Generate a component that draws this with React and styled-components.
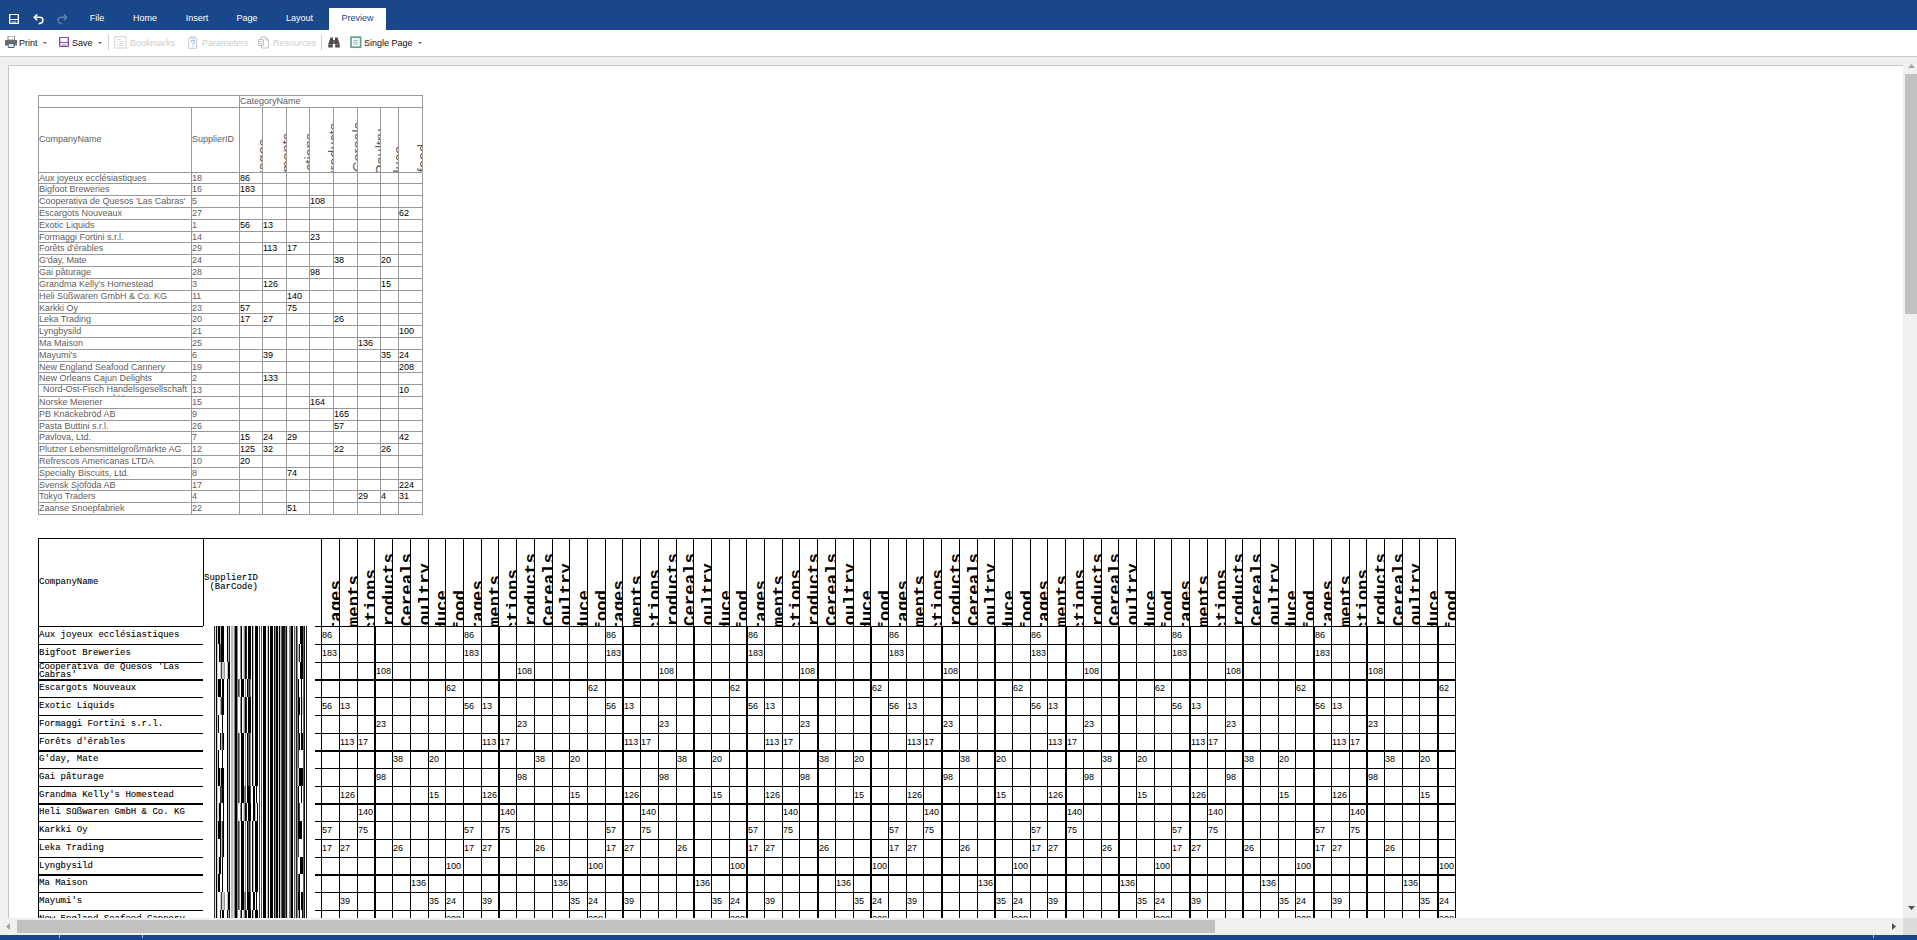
import React from "react";
import styled, { createGlobalStyle, css } from "styled-components";

const BLUE = "#19478a";

const GlobalStyle = createGlobalStyle`
  * { box-sizing: border-box; }
  html, body { margin: 0; padding: 0; overflow: hidden; }
  body { font-family: "Liberation Sans", Arial, sans-serif; font-size: 9px; background: #f0f0f0; }
`;

const Shell = styled.div`
  display: flex;
  flex-direction: column;
  width: 1917px;
  height: 940px;
  overflow: hidden;
  background: #f0f0f0;
`;

/* ---------- ribbon ---------- */

const Ribbon = styled.header`
  display: flex;
  align-items: flex-end;
  height: 30px;
  flex: none;
  background: ${BLUE};
  color: #fff;
`;

const QuickActions = styled.div`
  display: flex;
  gap: 13px;
  width: 78px;
  height: 22px;
  padding: 6px 0 0 9px;
`;

const QuickIcon = styled.svg`
  width: 11px;
  height: 11px;
  flex: none;
  opacity: ${(p) => (p.$faded ? 0.3 : 1)};
`;

const Tab = styled.div`
  width: ${(p) => p.$w}px;
  height: 22px;
  margin-left: ${(p) => (p.$active ? 4 : 0)}px;
  line-height: 20px;
  text-align: center;
  white-space: nowrap;
  background: ${(p) => (p.$active ? "#fff" : "transparent")};
  color: ${(p) => (p.$active ? BLUE : "#fff")};
`;

/* ---------- toolbar ---------- */

const Toolbar = styled.div`
  display: flex;
  align-items: center;
  height: 27px;
  flex: none;
  padding: 0 0 1px 5px;
  background: #fff;
  border-bottom: 1px solid #c6c6c6;
`;

const Tool = styled.div`
  display: flex;
  align-items: center;
  width: ${(p) => p.$w}px;
  height: 15px;
  white-space: nowrap;
  color: ${(p) => (p.$off ? "#cccccc" : "#111")};
`;

const ToolIcon = styled.svg`
  width: 13px;
  height: 13px;
  flex: none;
  margin-right: ${(p) => p.$gap}px;
`;

const Caret = styled.i`
  width: 0;
  height: 0;
  margin-left: ${(p) => p.$ml}px;
  border: 2px solid transparent;
  border-top-color: #666;
  border-bottom: 0;
`;

const Divider = styled.div`
  width: 1px;
  height: 15px;
  margin-right: ${(p) => p.$mr}px;
  background: #cfcfcf;
`;

/* ---------- viewer ---------- */

const Viewer = styled.main`
  display: grid;
  grid-template-columns: 1903px 14px;
  grid-template-rows: 861px 17px;
  flex: none;
`;

const PageArea = styled.div`
  overflow: hidden;
  padding: 8px 0 0 8px;
`;

const Sheet = styled.div`
  height: 853px;
  overflow: hidden;
  padding: 29px 0 0 29px;
  background: #fff;
  border: solid #c6c6c6;
  border-width: 1px 0 0 1px;
`;

const VScroll = styled.div`
  display: flex;
  flex-direction: column;
  align-items: flex-end;
  padding: 7px 0 8px;
`;

const HScroll = styled.div`
  display: flex;
  align-items: center;
  padding: 0 7px 0 6px;
`;

const Arrow = styled.svg`
  display: block;
  flex: none;
  fill: ${(p) => p.$c};
  margin: ${(p) => p.$m};
`;

const Thumb = styled.div`
  flex: none;
  width: ${(p) => p.$w}px;
  height: ${(p) => p.$h}px;
  background: #c1c1c1;
`;

const Spacer = styled.div`
  flex: 1;
`;

const Corner = styled.div`
  background: #dcdcdc;
`;

const StatusBar = styled.footer`
  display: flex;
  height: 5px;
  flex: none;
  background: ${BLUE};
`;

const StatusMark = styled.div`
  width: 1px;
  height: 3px;
  margin-left: ${(p) => p.$ml}px;
  background: #a9bcd8;
`;

/* ---------- plain cross table ---------- */

const PlainTable = styled.div`
  width: 385px;
  border: solid #999;
  border-width: 1px 0 0 1px;
  color: #606060;
`;

const PlainRow = styled.div`
  display: grid;
  grid-template-columns: ${(p) => p.$cols};
  height: ${(p) => p.$h}px;
`;

const PlainCell = styled.div`
  display: flex;
  align-items: ${(p) => (p.$tall ? "center" : "flex-start")};
  padding-bottom: ${(p) => (p.$tall ? 2 : 0)}px;
  overflow: hidden;
  min-width: 0;
  line-height: 10px;
  white-space: nowrap;
  border: solid #999;
  border-width: 0 1px 1px 0;
  ${(p) => p.$value && css`color: #000;`}
  ${(p) =>
    p.$wrap &&
    css`
      justify-content: center;
      white-space: normal;
      text-align: center;
      line-height: 8.5px;
    `}
`;

const UpHead = styled.div`
  display: flex;
  justify-content: flex-end;
  align-items: flex-start;
  overflow: hidden;
  min-width: 0;
  border: solid #999;
  border-width: 0 1px 1px 0;
`;

const UpText = styled.span`
  flex: none;
  writing-mode: vertical-rl;
  transform: rotate(180deg);
  white-space: nowrap;
  margin-top: ${(p) => p.$top}px;
  margin-right: ${(p) => (p.$mono ? -8 : -10)}px;
  line-height: 18px;
  font-size: 14.5px;
  ${(p) =>
    p.$mono &&
    css`
      font: bold 17.4px/20px "Liberation Mono", "Courier New", monospace;
    `}
`;

/* ---------- barcode cross table ---------- */

const CodeTable = styled.div`
  display: flex;
  margin-top: 23px;
  width: 1418px;
  color: #000;
`;

const mono = css`
  font-family: "Liberation Mono", "Courier New", monospace;
  font-size: 9px;
  -webkit-text-stroke: 0.1px #000;
`;

const NameColumn = styled.div`
  width: 165px;
  flex: none;
  border-left: 1px solid #000;
  ${mono}
`;

const CodeColumn = styled.div`
  width: 112px;
  flex: none;
  ${mono}
`;

const GridColumn = styled.div`
  width: 1141px;
  flex: none;
`;

const HeadCell = styled.div`
  display: flex;
  align-items: center;
  height: 88px;
  white-space: pre;
  line-height: 9px;
  border: solid #000;
  border-width: 1px 0 0 ${(p) => (p.$left ? 1 : 0)}px;
`;

const NameCell = styled.div`
  display: flex;
  align-items: flex-start;
  height: ${(p) => p.$h}px;
  padding: ${(p) => (p.$twoLines ? 0 : p.$thick ? 3 : 4)}px 10px 0 0;
  line-height: 8px;
  border-top: ${(p) => (p.$thick ? 2 : 1)}px solid #000;
`;

const Barcode = styled.svg`
  display: block;
  margin-left: 11px;
`;

const GridHead = styled.div`
  display: flex;
  height: 88px;
  padding-left: 6px;
  border-top: 1px solid #000;
`;

const GridRow = styled.div`
  display: flex;
  height: ${(p) => p.$h}px;
  padding-left: 6px;
  border-top: ${(p) => (p.$thick ? 2 : 1)}px solid #000;
`;

const GridCell = styled.div`
  display: flex;
  align-items: flex-start;
  justify-content: ${(p) => (p.$head ? "flex-end" : "flex-start")};
  width: ${(p) => p.$w}px;
  flex: none;
  overflow: hidden;
  white-space: nowrap;
  padding-top: ${(p) => p.$pad || 0}px;
  line-height: 10px;
  border: solid #000;
  border-width: 0 ${(p) => (p.$last ? 1 : 0)}px 0 ${(p) => (p.$thick ? 2 : 1)}px;
`;

/* ---------- data ---------- */

const CATEGORIES = [
  ["Beverages", 31, 41],
  ["Condiments", 25, 36],
  ["Confections", 25, 30],
  ["Dairy Products", 15, 14],
  ["Grains/Cereals", 14, 14],
  ["Meat/Poultry", 21, 24],
  ["Produce", 38, 51],
  ["Seafood", 36, 51],
];

const SUPPLIERS = [
  ["Aux joyeux ecclésiastiques", 18, { 0: 86 }],
  ["Bigfoot Breweries", 16, { 0: 183 }],
  ["Cooperativa de Quesos 'Las Cabras'", 5, { 3: 108 }],
  ["Escargots Nouveaux", 27, { 7: 62 }],
  ["Exotic Liquids", 1, { 0: 56, 1: 13 }],
  ["Formaggi Fortini s.r.l.", 14, { 3: 23 }],
  ["Forêts d'érables", 29, { 1: 113, 2: 17 }],
  ["G'day, Mate", 24, { 4: 38, 6: 20 }],
  ["Gai pâturage", 28, { 3: 98 }],
  ["Grandma Kelly's Homestead", 3, { 1: 126, 6: 15 }],
  ["Heli Süßwaren GmbH & Co. KG", 11, { 2: 140 }],
  ["Karkki Oy", 23, { 0: 57, 2: 75 }],
  ["Leka Trading", 20, { 0: 17, 1: 27, 4: 26 }],
  ["Lyngbysild", 21, { 7: 100 }],
  ["Ma Maison", 25, { 5: 136 }],
  ["Mayumi's", 6, { 1: 39, 6: 35, 7: 24 }],
  ["New England Seafood Cannery", 19, { 7: 208 }],
  ["New Orleans Cajun Delights", 2, { 1: 133 }],
  ["Nord-Ost-Fisch Handelsgesellschaft mbH", 13, { 7: 10 }],
  ["Norske Meierier", 15, { 3: 164 }],
  ["PB Knäckebröd AB", 9, { 4: 165 }],
  ["Pasta Buttini s.r.l.", 26, { 4: 57 }],
  ["Pavlova, Ltd.", 7, { 0: 15, 1: 24, 2: 29, 7: 42 }],
  ["Plutzer Lebensmittelgroßmärkte AG", 12, { 0: 125, 1: 32, 4: 22, 6: 26 }],
  ["Refrescos Americanas LTDA", 10, { 0: 20 }],
  ["Specialty Biscuits, Ltd.", 8, { 2: 74 }],
  ["Svensk Sjöföda AB", 17, { 7: 224 }],
  ["Tokyo Traders", 4, { 5: 29, 6: 4, 7: 31 }],
  ["Zaanse Snoepfabriek", 22, { 2: 51 }],
];

const PLAIN_COLS = "153px 48px 23px 24px 23px 24px 24px 23px 18px 24px";
const SHORT_ROWS = new Set([0, 5, 11, 16, 21, 26]);

/* [height, heavy top rule] */
const CODE_ROWS = [
  [18], [18], [17], [18, true], [18], [18], [17], [18, true], [18], [17],
  [18, true], [18], [18], [17], [18, true], [18], [18],
];

const REPEATS = 8;
const columnLine = (i) => Math.round(321.32 + 17.71 * i);
const THICK_COLUMNS = new Set([3, 10, 17, 21, 24, 28, 31, 35, 38, 42, 45, 49, 52, 56, 59, 63]);
const COLUMNS = Array.from({ length: REPEATS * 8 }, (_, i) => ({
  category: i % 8,
  width: columnLine(i + 1) - columnLine(i) + (i === REPEATS * 8 - 1 ? 1 : 0),
  thick: THICK_COLUMNS.has(i),
  last: i === REPEATS * 8 - 1,
}));

/* One hex digit per pixel: 0 is black, f is white. */
const BAR_A = "3d0c";
const BAR_B = "fff0b2fbbd8008";
const BAR_B_ALT = "9ffb00fbbd8008";
const BAR_C = "f4f5f000fb1f000f1800d0c611261df8600f5c28";
const MID_1 = "ff80fc802f000f0bf000";
const MID_2 = "48f000f8f0628f0bf000";
const MID_3 = "48f00086f0004ff00f0f";
const MID_4 = "ff80fc802f000ff00bf0";
const BAR_ROWS = [
  ["00c000", MID_1, "ff000"], ["f04000", MID_1, "b2f00"], ["ffc4cc", MID_1, "ff000", true],
  ["000f00", MID_2, "0ff0f"], ["ffa300", MID_1, "00f0c"], ["0fff0f", MID_1, "0ff0f"],
  ["ff0b40", MID_2, "40f00"], ["0fff0f", MID_2, "4ffff"], ["00c000", MID_2, "c0000"],
  ["ff3400", MID_3, "0ff0f"], ["d00ff0", MID_4, "04fff"], ["000b30", MID_2, "0000f"],
  ["ff0b40", MID_2, "4ffff"], ["d00f0f", MID_2, "ff000"], ["00ff0f", MID_2, "40fff"],
  ["ffc4cc", MID_3, "00f00", true], ["ff0f00", MID_1, "b0ff0"],
].map(([head, mid, tail, alt]) => BAR_A + head + (alt ? BAR_B_ALT : BAR_B) + mid + BAR_C + tail + "61f2");

/* ---------- parts ---------- */

function BarcodeStack() {
  let y = 0;
  const rects = [];
  BAR_ROWS.forEach((row, r) => {
    const h = CODE_ROWS[r][0];
    for (let i = 0; i < row.length; ) {
      let j = i + 1;
      while (row[j] === row[i]) j += 1;
      if (row[i] !== "f") {
        rects.push(<rect key={`${r}-${i}`} x={i} y={y} width={j - i} height={h} fill={`#${row[i].repeat(3)}`} />);
      }
      i = j;
    }
    y += h;
  });
  return (
    <Barcode width="93" height={y} shapeRendering="crispEdges">
      {rects}
    </Barcode>
  );
}

function PlainReport() {
  return (
    <PlainTable>
      <PlainRow $cols="201px 183px" $h={12}>
        <PlainCell />
        <PlainCell>CategoryName</PlainCell>
      </PlainRow>
      <PlainRow $cols={PLAIN_COLS} $h={65}>
        <PlainCell $tall>CompanyName</PlainCell>
        <PlainCell $tall>SupplierID</PlainCell>
        {CATEGORIES.map(([name, top]) => (
          <UpHead key={name}>
            <UpText $top={top}>{name}</UpText>
          </UpHead>
        ))}
      </PlainRow>
      {SUPPLIERS.map(([name, id, values], r) => (
        <PlainRow key={name} $cols={PLAIN_COLS} $h={SHORT_ROWS.has(r) ? 11 : 12}>
          <PlainCell $wrap={id === 13}>{name}</PlainCell>
          <PlainCell>{id}</PlainCell>
          {CATEGORIES.map(([category], c) => (
            <PlainCell key={category} $value>{values[c]}</PlainCell>
          ))}
        </PlainRow>
      ))}
    </PlainTable>
  );
}

function BarcodeReport() {
  return (
    <CodeTable>
      <NameColumn>
        <HeadCell>CompanyName</HeadCell>
        {CODE_ROWS.map(([h, thick], r) => (
          <NameCell key={r} $h={h} $thick={thick} $twoLines={SUPPLIERS[r][0].length > 30}>
            {SUPPLIERS[r][0]}
          </NameCell>
        ))}
      </NameColumn>
      <CodeColumn>
        <HeadCell $left>{"SupplierID\n (BarCode)"}</HeadCell>
        <BarcodeStack />
      </CodeColumn>
      <GridColumn>
        <GridHead>
          {COLUMNS.map((col, i) => (
            <GridCell key={i} $head $w={col.width} $last={col.last}>
              <UpText $mono $top={CATEGORIES[col.category][2]}>{CATEGORIES[col.category][0]}</UpText>
            </GridCell>
          ))}
        </GridHead>
        {CODE_ROWS.map(([h, thick], r) => (
          <GridRow key={r} $h={h} $thick={thick}>
            {COLUMNS.map((col, i) => (
              <GridCell key={i} $w={col.width} $thick={col.thick} $last={col.last} $pad={thick ? 2 : 3}>
                {SUPPLIERS[r][2][col.category]}
              </GridCell>
            ))}
          </GridRow>
        ))}
      </GridColumn>
    </CodeTable>
  );
}

const FloppyShape = ({ color }) => (
  <g fill="none" stroke={color} strokeWidth="1">
    <path d="M.5 .5H9.5V9.5H.5Z" />
    <path d="M.5 5.5H9.5" />
    <path d="M3 9.5V8H7V9.5" opacity=".8" />
    <path d="M1 .5V9.5M9 .5V9.5" opacity=".7" />
  </g>
);

export default function App() {
  return (
    <>
      <GlobalStyle />
      <Shell>
        <Ribbon>
          <QuickActions>
            <QuickIcon viewBox="0 0 11 11"><FloppyShape color="#fff" /></QuickIcon>
            <QuickIcon viewBox="0 0 11 11" fill="none" stroke="#fff" strokeWidth="1.6">
              <path d="M4.2 .4L1.3 3.3L4.2 6.2M1.5 3.3H6.8C9 3.3 9.9 4.8 9.9 6.3C9.9 8.4 8.3 9.5 5.6 9.7" />
            </QuickIcon>
            <QuickIcon $faded viewBox="0 0 11 11" fill="none" stroke="#fff" strokeWidth="1.4">
              <path d="M6.8 .4L9.7 3.3L6.8 6.2M9.5 3.3H4.2C2 3.3 1.1 4.8 1.1 6.3C1.1 8.4 2.7 9.5 5.4 9.7" />
            </QuickIcon>
          </QuickActions>
          <Tab $w={38}>File</Tab>
          <Tab $w={58}>Home</Tab>
          <Tab $w={46}>Insert</Tab>
          <Tab $w={54}>Page</Tab>
          <Tab $w={51}>Layout</Tab>
          <Tab $w={57} $active>Preview</Tab>
        </Ribbon>

        <Toolbar>
          <Tool $w={54}>
            <ToolIcon $gap={1} viewBox="0 0 13 13">
              <path d="M3 0H9.5V4H3Z" fill="#fff" stroke="#7d8a94" />
              <path d="M0 4H12V9.5H0Z" fill="#6b6b6b" />
              <path d="M3.2 7.5H9V11.5H3.2Z" fill="#d9e9f6" stroke="#55606a" />
            </ToolIcon>
            Print
            <Caret $ml={5} />
          </Tool>
          <Tool $w={49}>
            <ToolIcon $gap={0} viewBox="0 -1 13 13"><FloppyShape color="#8450a3" /></ToolIcon>
            Save
            <Caret $ml={5} />
          </Tool>
          <Divider $mr={5} />
          <Tool $w={74} $off>
            <ToolIcon $gap={3} viewBox="0 0 13 13" fill="none">
              <rect x=".7" y=".7" width="11.3" height="11.3" stroke="#dcdcdc" strokeWidth="1.3" />
              <path d="M3 3.5H7M5 5.5H10M5 7.5H10M5 9.5H10M3 5.5H4M3 7.5H4M3 9.5H4" stroke="#cfdfee" />
            </ToolIcon>
            Bookmarks
          </Tool>
          <Tool $w={70} $off>
            <ToolIcon $gap={1} viewBox="0 0 13 13" fill="none">
              <path d="M.7 2H8.7V12.3H.7Z" stroke="#cccccc" />
              <path d="M3 .6H6.5V2.5H3Z" fill="#fff" stroke="#cccccc" />
              <path d="M3 6C3 3.8 6.6 3.8 6.6 6C6.6 7.4 4.8 7.2 4.8 9M4.8 10V11" stroke="#9cc3e8" strokeWidth="1.2" />
            </ToolIcon>
            Parameters
          </Tool>
          <Tool $w={63} $off>
            <ToolIcon $gap={2} viewBox="0 0 13 13" fill="none" stroke="#c4c4c4">
              <path d="M3 3V1H8L10.5 3.5V12H3.5V10" />
              <path d="M7.8 1V4H10.5" />
              <path d="M.5 3.5H5.5V9.5H.5ZM1.5 5.5H4.5M1.5 7.5H4.5" />
            </ToolIcon>
            Resources
          </Tool>
          <Divider $mr={6} />
          <Tool $w={22}>
            <ToolIcon $gap={0} viewBox="0 0 13 13" fill="#4c4c4c">
              <path d="M2.5 1.5H5V4H7V1.5H9.5L11.7 8V11.5H7.2V8H4.8V11.5H.3V8Z" />
              <path d="M6 4V8M1 8.5H4.5M7.5 8.5H11" stroke="#aaa" strokeWidth=".6" />
            </ToolIcon>
          </Tool>
          <Tool $w={80}>
            <ToolIcon $gap={1} viewBox="0 0 13 13" fill="none">
              <rect x="1" y="1.2" width="9.6" height="10" stroke="#68a08c" strokeWidth="1.7" />
              <path d="M3.3 4.3H8.3M3.3 6.2H8.3M3.3 8.1H8.3" stroke="#8fb6d6" />
            </ToolIcon>
            Single Page
            <Caret $ml={5} />
          </Tool>
        </Toolbar>

        <Viewer>
          <PageArea>
            <Sheet>
              <PlainReport />
              <BarcodeReport />
            </Sheet>
          </PageArea>
          <VScroll>
            <Arrow width="7" height="4" $c="#a3a3a3" $m="0 2px 6px 0"><path d="M3.5 0L7 4H0Z" /></Arrow>
            <Thumb $w={12} $h={240} />
            <Spacer />
            <Arrow width="7" height="4" $c="#505050" $m="0 2px 0 0"><path d="M3.5 4L7 0H0Z" /></Arrow>
          </VScroll>
          <HScroll>
            <Arrow width="4" height="7" $c="#a3a3a3" $m="0 7px 0 0"><path d="M0 3.5L4 0V7Z" /></Arrow>
            <Thumb $w={1198} $h={13} />
            <Spacer />
            <Arrow width="4" height="7" $c="#505050" $m="0"><path d="M4 3.5L0 0V7Z" /></Arrow>
          </HScroll>
          <Corner />
        </Viewer>

        <StatusBar>
          <StatusMark $ml={59} />
          <StatusMark $ml={82} />
          <StatusMark $ml={1730} />
        </StatusBar>
      </Shell>
    </>
  );
}
